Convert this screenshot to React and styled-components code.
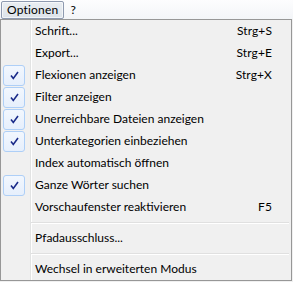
import React from "react";
import styled, { createGlobalStyle } from "styled-components";

const Global = createGlobalStyle`
  html, body { margin: 0; padding: 0; background: #f0f0f0; }
  body { font-family: "Lato", "Open Sans", sans-serif; font-size: 12px; color: #000; }
`;

const Page = styled.div`
  width: 293px;
  height: 282px;
  background: #f0f0f0;
  overflow: hidden;
`;

const MenuBar = styled.div`
  height: 19px;
  display: flex;
  align-items: center;
  padding-left: 1px;
  background: linear-gradient(#fdfdfe, #f3f5f8);
`;

const BarItem = styled.div`
  height: 18px;
  box-sizing: border-box;
  display: flex;
  align-items: center;
  padding: 0 ${(p) => (p.$active ? "5px" : "4px")};
  border: 1px solid ${(p) => (p.$active ? "#8e9ab0" : "transparent")};
  border-radius: 2px;
  background: ${(p) => (p.$active ? "linear-gradient(#e9edf2, #dde3ea)" : "transparent")};
  box-shadow: ${(p) => (p.$active ? "inset 0 0 0 1px rgba(255,255,255,0.6)" : "none")};
  line-height: 15px;
  margin-left: ${(p) => (p.$gap ? "1px" : "0")};
  letter-spacing: 0.2px;
`;

const Dropdown = styled.div`
  width: 292px;
  height: 262px;
  box-sizing: border-box;
  border: 1px solid #979797;
  background:
    linear-gradient(to right, transparent 29px, #e2e3e3 29px, #e2e3e3 30px, #ffffff 30px, #ffffff 31px, transparent 31px),
    #f0f0f0;
  display: flex;
  flex-direction: column;
`;

const Row = styled.div`
  height: 22px;
  display: grid;
  grid-template-columns: 34px 1fr auto;
  align-items: center;
  padding-right: 19px;
`;

const Gutter = styled.div`
  height: 22px;
  display: flex;
  align-items: center;
`;

const CheckBox = styled.div`
  width: 22px;
  height: 21px;
  margin-left: 2px;
  box-sizing: border-box;
  border: 1px solid #aecff7;
  border-radius: 3px;
  background: linear-gradient(#f2f7fe, #e6effc);
  display: flex;
  align-items: center;
  justify-content: center;
`;

const Label = styled.span`
  white-space: nowrap;
  line-height: 22px;
`;

const Shortcut = styled.span`
  white-space: nowrap;
  line-height: 22px;
  letter-spacing: 0.1px;
`;

const Separator = styled.div`
  height: 9px;
  display: flex;
  align-items: center;
  padding-left: 30px;
  padding-right: 2px;
  &::after {
    content: "";
    flex: 1;
    border-top: 1px solid #e0e0e0;
    border-bottom: 1px solid #ffffff;
    height: 0;
  }
`;

const Check = () => (
  <svg width="9" height="9" viewBox="0 0 9 9">
    <path d="M1 4.5 L3.3 7.5 L8 1" fill="none" stroke="#1a2b8a" strokeWidth="1.6" strokeLinejoin="miter" />
  </svg>
);

const items = [
  { label: "Schrift...", shortcut: "Strg+S" },
  { label: "Export...", shortcut: "Strg+E" },
  { label: "Flexionen anzeigen", shortcut: "Strg+X", checked: true },
  { label: "Filter anzeigen", checked: true },
  { label: "Unerreichbare Dateien anzeigen", checked: true },
  { label: "Unterkategorien einbeziehen", checked: true },
  { label: "Index automatisch öffnen" },
  { label: "Ganze Wörter suchen", checked: true },
  { label: "Vorschaufenster reaktivieren", shortcut: "F5" },
  { sep: true },
  { label: "Pfadausschluss..." },
  { sep: true },
  { label: "Wechsel in erweiterten Modus" },
];

export default function App() {
  return (
    <Page>
      <Global />
      <MenuBar>
        <BarItem $active>Optionen</BarItem>
        <BarItem $gap>?</BarItem>
      </MenuBar>
      <Dropdown>
        {items.map((it, i) =>
          it.sep ? (
            <Separator key={i} />
          ) : (
            <Row key={i}>
              <Gutter>
                {it.checked && (
                  <CheckBox>
                    <Check />
                  </CheckBox>
                )}
              </Gutter>
              <Label>{it.label}</Label>
              <Shortcut>{it.shortcut || ""}</Shortcut>
            </Row>
          )
        )}
      </Dropdown>
    </Page>
  );
}
